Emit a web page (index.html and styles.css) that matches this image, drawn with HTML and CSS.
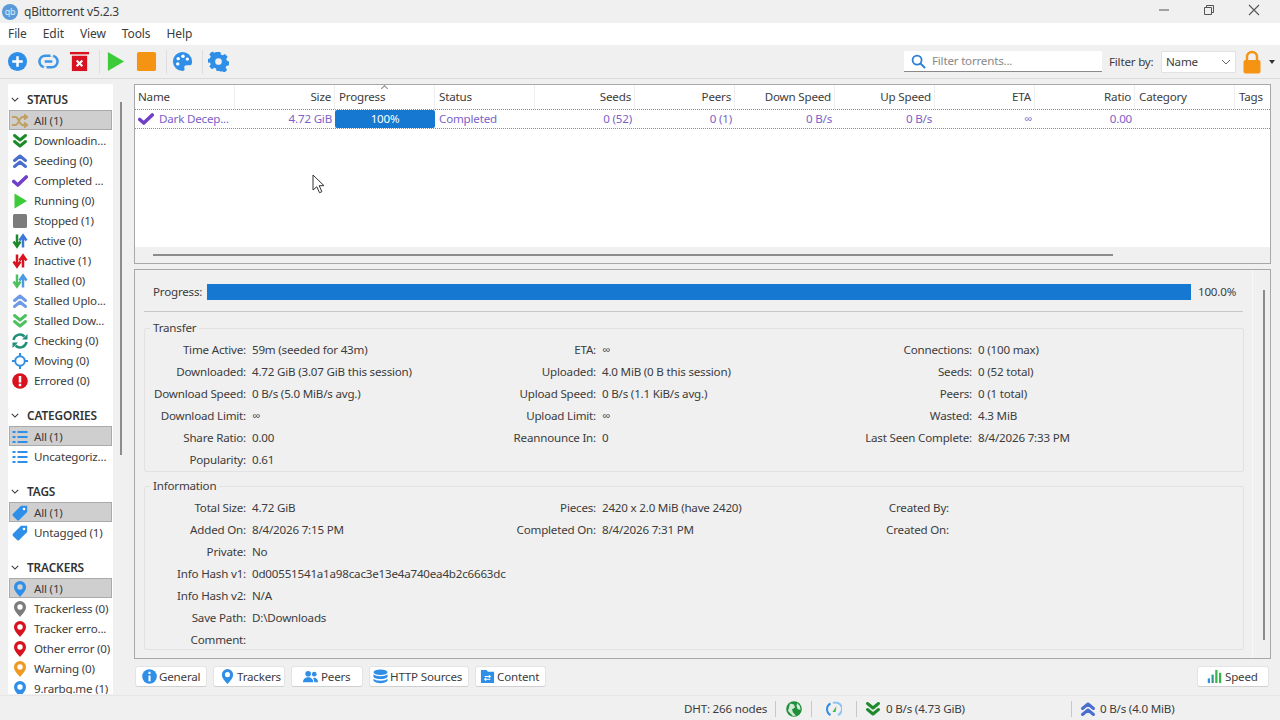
FILE: index.html
```html
<!DOCTYPE html>
<html lang="en">
<head>
<meta charset="utf-8">
<title>qBittorrent v5.2.3</title>
<link rel="stylesheet" href="styles.css">
</head>
<body>
<svg class="defs" width="0" height="0" aria-hidden="true">
  <defs>
    <symbol id="i-down" viewBox="0 0 16 16"><path d="M2.500 2.500l5.500 4.500 5.500-4.500M2.500 8.500l5.500 4.500 5.500-4.500" fill="none" stroke="currentColor" stroke-width="3" stroke-linecap="round" stroke-linejoin="round"/></symbol>
    <symbol id="i-up" viewBox="0 0 16 16"><path d="M2.500 7.500l5.500-4.500 5.500 4.500M2.500 13.500l5.500-4.500 5.500 4.500" fill="none" stroke="currentColor" stroke-width="3" stroke-linecap="round" stroke-linejoin="round"/></symbol>
    <symbol id="i-check" viewBox="0 0 16 16"><path d="M1.800 8.500l4 3.500L14.200 4" fill="none" stroke="currentColor" stroke-width="3.600" stroke-linecap="round" stroke-linejoin="round"/></symbol>
    <symbol id="i-play" viewBox="0 0 16 16"><path d="M2.500 .5L15 8 2.500 15.500z" fill="currentColor"/></symbol>
    <symbol id="i-square" viewBox="0 0 16 16"><rect x="1" y="1" width="14" height="14" rx="1.500" fill="currentColor"/></symbol>
    <symbol id="i-updown" viewBox="0 0 16 16"><path d="M5 1.500v11M1.500 8.500L5 13.500 8.500 8.500" fill="none" stroke="var(--a)" stroke-width="2.500"/><path d="M11 14.500v-11M7.500 7.500L11 2.500 14.500 7.500" fill="none" stroke="var(--b)" stroke-width="2.500"/></symbol>
    <symbol id="i-shuffle" viewBox="0 0 16 16"><path d="M0 4h3.500c3 0 4 8 7 8h3M0 12h3.500c3 0 4-8 7-8h3M12 1.500L15.500 4 12 6.500M12 9.500l3.500 2.500-3.500 2.500" fill="none" stroke="currentColor" stroke-width="1.800"/></symbol>
    <symbol id="i-sync" viewBox="0 0 16 16"><path d="M1.500 7a6.500 6.500 0 0 1 11-3.500M14.500 9a6.500 6.500 0 0 1-11 3.500" fill="none" stroke="currentColor" stroke-width="2.500"/><path d="M10 6.500h5.500V1zM6 9.500H.5V15z" fill="currentColor"/></symbol>
    <symbol id="i-moving" viewBox="0 0 16 16"><circle cx="8" cy="8" r="4.800" fill="none" stroke="currentColor" stroke-width="2"/><path d="M8 0v3M8 13v3M0 8h3M13 8h3" stroke="currentColor" stroke-width="2"/></symbol>
    <symbol id="i-error" viewBox="0 0 16 16"><circle cx="8" cy="8" r="7.800" fill="currentColor"/><path d="M8 3v6.500M8 10.800v2.400" stroke="#fff" stroke-width="2.500"/></symbol>
    <symbol id="i-list" viewBox="0 0 16 16"><path d="M.5 3h3M5.500 3h10M.5 8h3M5.500 8h10M.5 13h3M5.500 13h10" stroke="currentColor" stroke-width="2"/></symbol>
    <symbol id="i-tag" viewBox="0 0 16 16"><path d="M9 .8h6.200V7L7.200 15a1.500 1.500 0 0 1-2.100 0L1 10.900a1.500 1.500 0 0 1 0-2.100z" fill="currentColor"/><circle cx="12" cy="4" r="1.300" fill="#fff"/></symbol>
    <symbol id="i-pin" viewBox="0 0 16 16"><path fill-rule="evenodd" d="M8 0a6 6 0 0 1 6 6c0 3.800-3.500 7-6 10-2.500-3-6-6.200-6-10a6 6 0 0 1 6-6zm0 3.300a2.700 2.700 0 1 0 0 5.400 2.700 2.700 0 0 0 0-5.400z" fill="currentColor"/></symbol>
  </defs>
</svg>

<header class="titlebar">
  <span class="applogo">qb</span>
  <span class="title">qBittorrent v5.2.3</span>
  <div class="winctl">
    <svg class="winicon" viewBox="0 0 12 12"><path d="M1 6h10" stroke="#555" fill="none"/></svg>
    <svg class="winicon" viewBox="0 0 12 12"><path d="M1.500 3.500h7v7h-7zM3.500 3.500v-2h7v7h-2" stroke="#555" fill="none"/></svg>
    <svg class="winicon" viewBox="0 0 12 12"><path d="M1 1l10 10M11 1L1 11" stroke="#555" fill="none" stroke-width="1.100"/></svg>
  </div>
</header>

<nav class="menubar">
  <span>File</span><span>Edit</span><span>View</span><span>Tools</span><span>Help</span>
</nav>

<div class="toolbar">
  <svg class="tool" viewBox="0 0 22 22"><circle cx="11" cy="11" r="10" fill="#2f8fe8"/><path d="M11 5.500v11M5.500 11h11" stroke="#fff" stroke-width="2.600"/></svg>
  <svg class="tool" viewBox="0 0 22 22"><rect x="1.500" y="5" width="19" height="12" rx="6" fill="none" stroke="#3c95e6" stroke-width="2.600"/><path d="M7 11h8" stroke="#3c95e6" stroke-width="2.600"/><path d="M14.500 2v4M7.500 16v4" stroke="#f0f0f0" stroke-width="3"/></svg>
  <svg class="tool" viewBox="0 0 22 22"><path d="M1 1h20v2.500H1z" fill="#d8121f"/><path d="M3 5h16v16H3z" fill="#d8121f"/><path d="M8 10l6 6M14 10l-6 6" stroke="#fff" stroke-width="2.200"/></svg>
  <i class="tool-sep"></i>
  <svg class="tool" viewBox="0 0 22 22"><path d="M3 1l17 10L3 21z" fill="#3ecb3a"/></svg>
  <svg class="tool" viewBox="0 0 22 22"><rect x="1" y="1" width="20" height="20" rx="2" fill="#f59312"/></svg>
  <i class="tool-sep"></i>
  <svg class="tool" viewBox="0 0 22 22"><path d="M11 1a10 10 0 1 0 0 20c2 0 2.500-1.500 2-3-.6-1.800.5-3 2.500-3H19c1.500 0 2-1.500 2-4A10 10 0 0 0 11 1z" fill="#2f8fe8"/><circle cx="6.500" cy="8" r="1.800" fill="#fff"/><circle cx="11.500" cy="5.500" r="1.800" fill="#fff"/><circle cx="16" cy="8.500" r="1.800" fill="#fff"/><circle cx="6" cy="13.500" r="1.800" fill="#fff"/></svg>
  <i class="tool-sep"></i>
  <svg class="tool" viewBox="0 0 22 22"><path fill-rule="evenodd" d="M9 1h4l.6 2.700 1.800.8 2.400-1.400 2.800 2.800-1.500 2.400.8 1.800 2.100.9v4l-2.700.6-.8 1.800 1.500 2.400-2.800 2.800-2.400-1.500-1.800.8L13 21H9l-.6-2.700-1.800-.8-2.400 1.500-2.800-2.800 1.500-2.400-.8-1.800L0 12.400v-4l2.100-.9.8-1.800L1.400 3.300l2.800-2.800 2.400 1.400 1.800-.8zM11 7.500a3.500 3.500 0 1 0 0 7 3.500 3.500 0 0 0 0-7z" fill="#2f8fe8"/></svg>
  <div class="toolbar-right">
    <label class="search">
      <svg class="search-icon" viewBox="0 0 16 16"><circle cx="6.500" cy="6.500" r="4.800" fill="none" stroke="#2b7fd4" stroke-width="1.900"/><path d="M10 10l5 5" stroke="#2b7fd4" stroke-width="2.200"/></svg>
      <span>Filter torrents...</span>
    </label>
    <span class="filter-label">Filter by:</span>
    <div class="combo">
      <span>Name</span>
      <svg class="combo-arrow" viewBox="0 0 10 6"><path d="M1 1l4 4 4-4" fill="none" stroke="#666"/></svg>
    </div>
    <svg class="lock" viewBox="0 0 18 24"><path d="M4 10V7a5 5 0 0 1 10 0v3" fill="none" stroke="#f59312" stroke-width="2.400"/><rect x="0.500" y="10" width="17" height="13.500" rx="2" fill="#f59312"/></svg>
    <i class="lock-arrow"></i>
  </div>
</div>

<main class="workspace">
  <aside class="sidebar-wrap">
    <div class="sidebar">
      <section class="filter-group">
        <h2><svg class="chev" viewBox="0 0 10 6"><path d="M1 1l4 4 4-4" fill="none" stroke="#333" stroke-width="1.300"/></svg>STATUS</h2>
        <ul>
          <li class="sel"><svg class="ic c-tan"><use href="#i-shuffle"/></svg>All (1)</li>
          <li><svg class="ic c-green"><use href="#i-down"/></svg>Downloadin...</li>
          <li><svg class="ic c-indigo"><use href="#i-up"/></svg>Seeding (0)</li>
          <li><svg class="ic c-purple"><use href="#i-check"/></svg>Completed ...</li>
          <li><svg class="ic c-lime"><use href="#i-play"/></svg>Running (0)</li>
          <li><svg class="ic c-gray"><use href="#i-square"/></svg>Stopped (1)</li>
          <li><svg class="ic ud-active"><use href="#i-updown"/></svg>Active (0)</li>
          <li><svg class="ic ud-inactive"><use href="#i-updown"/></svg>Inactive (1)</li>
          <li><svg class="ic ud-stalled"><use href="#i-updown"/></svg>Stalled (0)</li>
          <li><svg class="ic c-ltblue"><use href="#i-up"/></svg>Stalled Uplo...</li>
          <li><svg class="ic c-ltgreen"><use href="#i-down"/></svg>Stalled Dow...</li>
          <li><svg class="ic c-teal"><use href="#i-sync"/></svg>Checking (0)</li>
          <li><svg class="ic c-blue"><use href="#i-moving"/></svg>Moving (0)</li>
          <li><svg class="ic c-red"><use href="#i-error"/></svg>Errored (0)</li>
        </ul>
      </section>
      <section class="filter-group">
        <h2><svg class="chev" viewBox="0 0 10 6"><path d="M1 1l4 4 4-4" fill="none" stroke="#333" stroke-width="1.300"/></svg>CATEGORIES</h2>
        <ul>
          <li class="sel"><svg class="ic c-blue"><use href="#i-list"/></svg>All (1)</li>
          <li><svg class="ic c-blue"><use href="#i-list"/></svg>Uncategoriz...</li>
        </ul>
      </section>
      <section class="filter-group">
        <h2><svg class="chev" viewBox="0 0 10 6"><path d="M1 1l4 4 4-4" fill="none" stroke="#333" stroke-width="1.300"/></svg>TAGS</h2>
        <ul>
          <li class="sel"><svg class="ic c-blue"><use href="#i-tag"/></svg>All (1)</li>
          <li><svg class="ic c-blue"><use href="#i-tag"/></svg>Untagged (1)</li>
        </ul>
      </section>
      <section class="filter-group">
        <h2><svg class="chev" viewBox="0 0 10 6"><path d="M1 1l4 4 4-4" fill="none" stroke="#333" stroke-width="1.300"/></svg>TRACKERS</h2>
        <ul>
          <li class="sel"><svg class="ic c-blue"><use href="#i-pin"/></svg>All (1)</li>
          <li><svg class="ic c-gray"><use href="#i-pin"/></svg>Trackerless (0)</li>
          <li><svg class="ic c-red"><use href="#i-pin"/></svg>Tracker erro...</li>
          <li><svg class="ic c-red"><use href="#i-pin"/></svg>Other error (0)</li>
          <li><svg class="ic c-orange"><use href="#i-pin"/></svg>Warning (0)</li>
          <li><svg class="ic c-blue"><use href="#i-pin"/></svg>9.rarbg.me (1)</li>
        </ul>
      </section>
    </div>
    <i class="side-scroll"></i>
  </aside>

  <div class="content">
    <section class="torrents">
      <div class="thead">
        <span>Name</span><span class="r">Size</span><span>Progress<i class="sort"></i></span><span>Status</span><span class="r">Seeds</span><span class="r">Peers</span><span class="r">Down Speed</span><span class="r">Up Speed</span><span class="r">ETA</span><span class="r">Ratio</span><span>Category</span><span>Tags</span>
      </div>
      <div class="trow">
        <span class="tname"><svg class="ic c-purple"><use href="#i-check"/></svg>Dark Decep...</span><span class="r">4.72 GiB</span><span class="pbar">100%</span><span>Completed</span><span class="r">0 (52)</span><span class="r">0 (1)</span><span class="r">0 B/s</span><span class="r">0 B/s</span><span class="r">∞</span><span class="r">0.00</span><span></span><span></span>
      </div>
      <div class="tspace">
        <svg class="cursor" viewBox="0 0 14 20"><path d="M1 1v15l3.800-3.300 2.700 6 2.400-1-2.700-6H12z" fill="#fff" stroke="#333"/></svg>
      </div>
      <div class="hscroll"><i></i></div>
    </section>

    <section class="details">
      <div class="detail-scroll">
        <div class="progress-row">
          <span class="progress-label">Progress:</span><div class="bigbar"></div><span>100.0%</span>
        </div>
        <fieldset class="group">
          <legend>Transfer</legend>
          <dl class="info">
            <dt>Time Active:</dt><dd>59m (seeded for 43m)</dd><dt>ETA:</dt><dd>∞</dd><dt>Connections:</dt><dd>0 (100 max)</dd>
            <dt>Downloaded:</dt><dd>4.72 GiB (3.07 GiB this session)</dd><dt>Uploaded:</dt><dd>4.0 MiB (0 B this session)</dd><dt>Seeds:</dt><dd>0 (52 total)</dd>
            <dt>Download Speed:</dt><dd>0 B/s (5.0 MiB/s avg.)</dd><dt>Upload Speed:</dt><dd>0 B/s (1.1 KiB/s avg.)</dd><dt>Peers:</dt><dd>0 (1 total)</dd>
            <dt>Download Limit:</dt><dd>∞</dd><dt>Upload Limit:</dt><dd>∞</dd><dt>Wasted:</dt><dd>4.3 MiB</dd>
            <dt>Share Ratio:</dt><dd>0.00</dd><dt>Reannounce In:</dt><dd>0</dd><dt>Last Seen Complete:</dt><dd>8/4/2026 7:33 PM</dd>
            <dt>Popularity:</dt><dd>0.61</dd>
          </dl>
        </fieldset>
        <fieldset class="group">
          <legend>Information</legend>
          <dl class="info info-b">
            <dt>Total Size:</dt><dd>4.72 GiB</dd><dt>Pieces:</dt><dd>2420 x 2.0 MiB (have 2420)</dd><dt>Created By:</dt><dd></dd>
            <dt>Added On:</dt><dd>8/4/2026 7:15 PM</dd><dt>Completed On:</dt><dd>8/4/2026 7:31 PM</dd><dt>Created On:</dt><dd></dd>
            <dt>Private:</dt><dd class="wide">No</dd>
            <dt>Info Hash v1:</dt><dd class="wide">0d00551541a1a98cac3e13e4a740ea4b2c6663dc</dd>
            <dt>Info Hash v2:</dt><dd class="wide">N/A</dd>
            <dt>Save Path:</dt><dd class="wide">D:\Downloads</dd>
            <dt>Comment:</dt><dd class="wide"></dd>
          </dl>
        </fieldset>
      </div>
      <i class="detail-vscroll"></i>
    </section>

    <div class="tabs">
      <button class="tab"><svg class="ic" viewBox="0 0 16 16"><circle cx="8" cy="8" r="7.800" fill="#2f8fe8"/><path d="M8 3v2.200M8 7v6" stroke="#fff" stroke-width="2.200"/></svg>General</button>
      <button class="tab"><svg class="ic c-blue"><use href="#i-pin"/></svg>Trackers</button>
      <button class="tab tab-peers"><svg class="ic" viewBox="0 0 16 16"><circle cx="5.500" cy="5" r="3" fill="#2f8fe8"/><circle cx="12" cy="5.500" r="2.500" fill="#2f8fe8"/><path d="M0 14c0-7 11-7 11 0zM12 14c0-2-.5-3.500-1.500-4.500 2.500-1 5.500.5 5.500 4.500z" fill="#2f8fe8"/></svg>Peers</button>
      <button class="tab tab-http"><svg class="ic" viewBox="0 0 16 16"><ellipse cx="8" cy="3.500" rx="7.500" ry="3" fill="#2f8fe8"/><path d="M.5 5.500c2 2.800 13 2.800 15 0v3c-2 3-13 3-15 0zM.5 10.500c2 2.800 13 2.800 15 0v2c-2 3.500-13 3.500-15 0z" fill="#2f8fe8"/></svg>HTTP Sources</button>
      <button class="tab tab-content"><svg class="ic" viewBox="0 0 16 16"><path d="M1 1h6l1.500 2H15v12H1z" fill="#2f8fe8"/><path d="M5 8h6M9.500 6.500L11 8 9.500 9.500M11 11H5M6.500 9.500L5 11l1.500 1.500" fill="none" stroke="#fff" stroke-width="1.100"/></svg>Content</button>
      <button class="tab tab-speed"><svg class="ic" viewBox="0 0 16 16"><path d="M2 10v5" stroke="#2f8fe8" stroke-width="2.400"/><path d="M6 6v9" stroke="#2f9c8a" stroke-width="2.400"/><path d="M10 1v14" stroke="#3ab54a" stroke-width="2.400"/><path d="M14 4v11" stroke="#3ab54a" stroke-width="2.400"/></svg>Speed</button>
    </div>
  </div>
</main>

<footer class="statusbar">
  <span class="st st-dht">DHT: 266 nodes</span>
  <span class="st st-globe"><svg class="ic" viewBox="0 0 16 16"><circle cx="8" cy="8" r="7.800" fill="#1f8f3a"/><path d="M4 2.500l4 1 1 3-3 2 1 3 3 3-3 .5-5-5zM11 2l3 3 .5 4-3-1-1-3z" fill="#fff" opacity=".8"/></svg></span>
  <span class="st st-gauge"><svg class="ic" viewBox="0 0 16 16"><path d="M4.500 14a6.500 6.500 0 0 1 0-11.500" fill="none" stroke="#2f8fe8" stroke-width="2"/><path d="M7 2a6.500 6.500 0 0 1 5 12" fill="none" stroke="#8cc4f2" stroke-width="2"/><path d="M6.500 11l4-6-1 6z" fill="#3ab54a"/></svg></span>
  <span class="st st-dl"><svg class="ic c-green"><use href="#i-down"/></svg>0 B/s (4.73 GiB)</span>
  <span class="st st-ul"><svg class="ic c-indigo"><use href="#i-up"/></svg>0 B/s (4.0 MiB)</span>
</footer>
</body>
</html>
```

FILE: styles.css
```css
* { box-sizing: border-box; }
html, body { margin: 0; height: 100%; }
body {
  width: 1280px; height: 720px; overflow: hidden;
  display: flex; flex-direction: column;
  background: #f0f0f0; color: #3c3c3c;
  font: 11.6px/16px "Noto Sans", "Open Sans", sans-serif;
  letter-spacing: -0.2px;
}
.defs { position: absolute; }
.ic { width: 16px; height: 16px; flex: none; display: block; }

.titlebar { height: 23px; flex: none; display: flex; align-items: center; padding-left: 2px; }
.applogo { width: 16px; height: 16px; border-radius: 50%; background: #5a9ad8; color: #dcecfa; font-size: 9px; line-height: 16px; text-align: center; }
.title { margin-left: 6px; font-size: 12px; }
.winctl { margin: 0 20px 3px auto; display: flex; gap: 33px; }
.winicon { width: 12px; height: 12px; display: block; }

.menubar { height: 22px; flex: none; background: #fff; display: flex; align-items: center; padding-left: 8px; gap: 16px; font-size: 12px; letter-spacing: -0.1px; }

.toolbar { height: 34px; flex: none; display: flex; align-items: center; padding: 0 5px 0 7px; border-bottom: 1px solid #dcdcdc; }
.tool { width: 21px; height: 21px; margin-right: 10px; flex: none; }
.tool-sep { width: 1px; height: 24px; background: #dedede; margin: 0 5px 0 -1px; flex: none; }
.toolbar-right { margin-left: auto; display: flex; align-items: center; }
.search { width: 198px; height: 21px; background: #fff; border-bottom: 1px solid #8a8a8a; display: flex; align-items: center; padding-left: 7px; color: #888; }
.search-icon { width: 15px; height: 15px; margin-right: 6px; }
.filter-label { width: 52px; flex: none; margin-left: 7px; white-space: nowrap; }
.combo { width: 75px; height: 22px; background: #fff; border: 1px solid #e2e2e2; display: flex; align-items: center; justify-content: space-between; padding: 0 4px; }
.combo-arrow { width: 10px; height: 6px; }
.lock { width: 18px; height: 24px; margin-left: 7px; }
.lock-arrow { width: 0; height: 0; border: 3.500px solid transparent; border-top: 4px solid #333; border-bottom: 0; margin-left: 8px; }

.workspace { flex: 1; min-height: 0; display: flex; padding-top: 5px; }
.sidebar-wrap { width: 134px; flex: none; display: flex; height: 610px; }
.sidebar { width: 105px; margin-left: 8px; height: 610px; background: #fff; overflow: hidden; padding-top: 6px; }
.side-scroll { width: 2px; height: 353px; margin: 18px 0 0 7px; background: #8c8c8c; }
.filter-group { margin-bottom: 15px; }
.filter-group h2 { margin: 0 0 2px; height: 18px; font-size: 11.8px; line-height: 18px; font-weight: 600; display: flex; align-items: center; color: #333; padding-left: 3px; letter-spacing: -0.1px; }
.chev { width: 8px; height: 5px; margin-right: 8px; }
.filter-group ul { list-style: none; margin: 0; padding: 0 1px; }
.filter-group li { height: 20px; display: flex; align-items: center; gap: 6px; padding-left: 3px; white-space: nowrap; }
.filter-group li.sel { background: #cfcfcf; border: 1px solid #aaa; padding: 1px 0 0 2px; margin-bottom: 1px; }

.c-tan { color: #c0a060; } .c-green { color: #1f8a2c; } .c-indigo { color: #4a6ed0; }
.c-purple { color: #7040c8; } .c-lime { color: #3ecb3a; } .c-gray { color: #7c7c7c; }
.c-ltblue { color: #6f9ae6; } .c-ltgreen { color: #4fc060; } .c-teal { color: #1f8f78; }
.c-blue { color: #2f8fe8; } .c-red { color: #d8121f; } .c-orange { color: #ee9a22; }
.ud-active { --a: #1f8a2c; --b: #3c78d8; }
.ud-inactive { --a: #d8121f; --b: #d8121f; }
.ud-stalled { --a: #4fc060; --b: #4a9ae8; }

.content { width: 1137px; flex: none; display: flex; flex-direction: column; }
.torrents { height: 180px; flex: none; border: 1px solid #a8a8a8; background: #fff; display: flex; flex-direction: column; }
.thead, .trow { display: grid; grid-template-columns: 100px repeat(10, 100px) 35px; }
.thead { height: 25px; border-bottom: 1px dotted #8a8a8a; }
.thead span { display: flex; align-items: center; padding: 0 3px 0 4px; border-right: 1px solid #eee; position: relative; }
.thead span:first-child { padding-left: 3px; }
.thead span:last-child { border-right: 0; }
.thead .r, .trow .r { justify-content: flex-end; text-align: right; }
.sort { position: absolute; left: 47px; top: 1px; width: 5px; height: 5px; border-left: 1px solid #888; border-top: 1px solid #888; transform: rotate(45deg); }
.trow { height: 19px; border-bottom: 1px dotted #8a8a8a; color: #7a62c8; }
.trow span { padding: 0 3px 0 4px; line-height: 18px; white-space: nowrap; overflow: hidden; }
.trow .tname { display: flex; align-items: center; gap: 5px; padding-left: 3px; }
.trow .pbar { background: #1678d0; color: #fff; text-align: center; border-radius: 2px; padding: 0; }
.tspace { flex: 1; position: relative; }
.cursor { position: absolute; left: 177px; top: 45px; width: 14px; height: 20px; }
.hscroll { height: 16px; background: #f0f0f0; padding: 7px 0 0 18px; }
.hscroll i { display: block; width: 960px; height: 2px; background: #8c8c8c; }

.details { height: 390px; flex: none; margin-top: 5px; border: 1px solid #a8a8a8; display: flex; position: relative; }
.detail-scroll { width: 1118px; padding: 13px 0 0 9px; border-right: 1px solid #f7f7f7; }
.progress-row { display: flex; align-items: center; height: 29px; width: 1099px; padding: 0 0 10px 9px; border-bottom: 1px solid #c8c8c8; white-space: nowrap; }
.progress-label { width: 48px; margin-right: 6px; flex: none; }
.bigbar { width: 984px; height: 16px; background: #1678d0; margin-right: 7px; flex: none; }
.progress-row + .group { margin-top: 8px; }
.group { border: 1px solid #e2e2e2; border-radius: 2px; margin: 0 0 6px; padding: 0; width: 1100px; }
.group legend { margin-left: 5px; padding: 0 3px; line-height: 16px; }
.info { margin: 0; padding-top: 3px; display: grid; grid-template-columns: 101px 238px 100px 254px 110px 1fr; grid-auto-rows: 22px; align-items: center; column-gap: 6px; }
.info-b { grid-template-columns: 101px 238px 100px 241px 100px 1fr; height: 155px; }
.info dt { text-align: right; white-space: nowrap; }
.info dd { margin: 0; white-space: nowrap; }
.info dd.wide { grid-column: 2 / -1; }
.detail-vscroll { position: absolute; right: 5px; top: 20px; width: 2px; height: 350px; background: #8c8c8c; }

.tabs { display: flex; gap: 6px; padding: 7px 2px 0 1px; height: 36px; flex: none; }
.tab { height: 21px; width: 72px; padding: 0 0 0 6px; display: flex; align-items: center; gap: 2px; background: #fff; border: 1px solid #e4e4e4; border-bottom-color: #d0d0d0; border-radius: 3px; font: inherit; color: inherit; letter-spacing: inherit; white-space: nowrap; }
.tab .ic { width: 15px; height: 15px; }
.tab-peers { padding-left: 11px; gap: 3px; }
.tab-http { width: 100px; padding-left: 3px; }
.tab-content { width: 71px; padding-left: 4px; }
.tab-speed { margin-left: auto; padding-left: 9px; gap: 3px; }

.statusbar { height: 25px; flex: none; display: flex; align-items: center; border-top: 1px solid #e6e6e6; padding: 2px 0 0 684px; }
.st { display: flex; align-items: center; height: 16px; white-space: nowrap; }
.st-dht { width: 92px; border-right: 1px solid #c8c8c8; }
.st-globe { width: 36px; justify-content: center; border-right: 1px solid #c8c8c8; }
.st-gauge { width: 45px; justify-content: center; border-right: 1px solid #c8c8c8; }
.st-dl { width: 215px; padding-left: 8px; gap: 5px; border-right: 1px solid #c8c8c8; }
.st-ul { padding-left: 8px; gap: 4px; }
```
